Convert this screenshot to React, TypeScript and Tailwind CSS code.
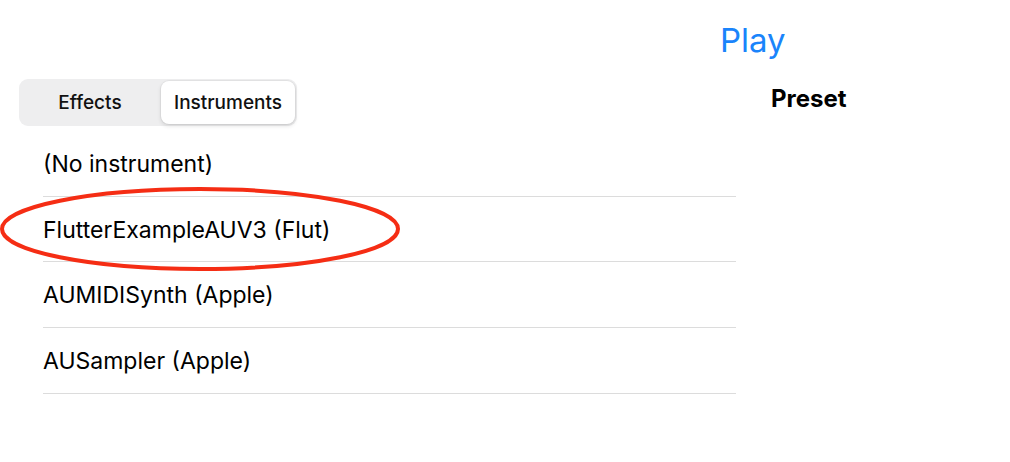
import React from 'react';

const instruments = [
  '(No instrument)',
  'FlutterExampleAUV3 (Flut)',
  'AUMIDISynth (Apple)',
  'AUSampler (Apple)',
];

function SegmentedControl() {
  return (
    <div className="flex h-[47px] w-[278px] items-center rounded-[9px] bg-[#eeeeef] p-[2px]">
      <div className="flex h-full flex-1 items-center justify-center pr-[2px] pt-[2px] text-[19px] font-medium text-[#111]">
        Effects
      </div>
      <div className="flex h-full w-[134px] items-center justify-center rounded-[8px] bg-white pt-[2px] text-[19px] font-medium text-[#111] shadow-[0_0_0_1px_rgba(0,0,0,0.04),0_2px_4px_rgba(0,0,0,0.12)]">
        Instruments
      </div>
    </div>
  );
}

export default function App() {
  return (
    <div
      className="relative h-[462px] w-[1010px] overflow-hidden bg-white text-black"
      style={{ fontFamily: 'Inter, "Noto Sans", sans-serif' }}
    >
      <div className="flex pl-[720px] pt-[20px]">
        <span className="text-[33px] leading-[40px] text-[#1a84fb]">Play</span>
      </div>

      <div className="flex pt-[19px]">
        <div className="w-[736px]">
          <div className="pl-[19px]">
            <SegmentedControl />
          </div>
          <ul className="ml-[43px] mt-[5px]">
            {instruments.map((name) => (
              <li
                key={name}
                className="flex h-[65.67px] items-center border-b border-[#dcdcdc] pt-[2px] text-[23px]"
              >
                {name}
              </li>
            ))}
          </ul>
        </div>
        <div className="pl-[35px] pt-[5px]">
          <h2 className="text-[24px] font-bold leading-[30px]">Preset</h2>
        </div>
      </div>

      <svg
        className="pointer-events-none absolute left-0 top-0"
        width="1010"
        height="462"
        viewBox="0 0 1010 462"
      >
        <ellipse cx="200" cy="229" rx="198" ry="40" fill="none" stroke="#f52d14" strokeWidth="4" />
      </svg>
    </div>
  );
}
